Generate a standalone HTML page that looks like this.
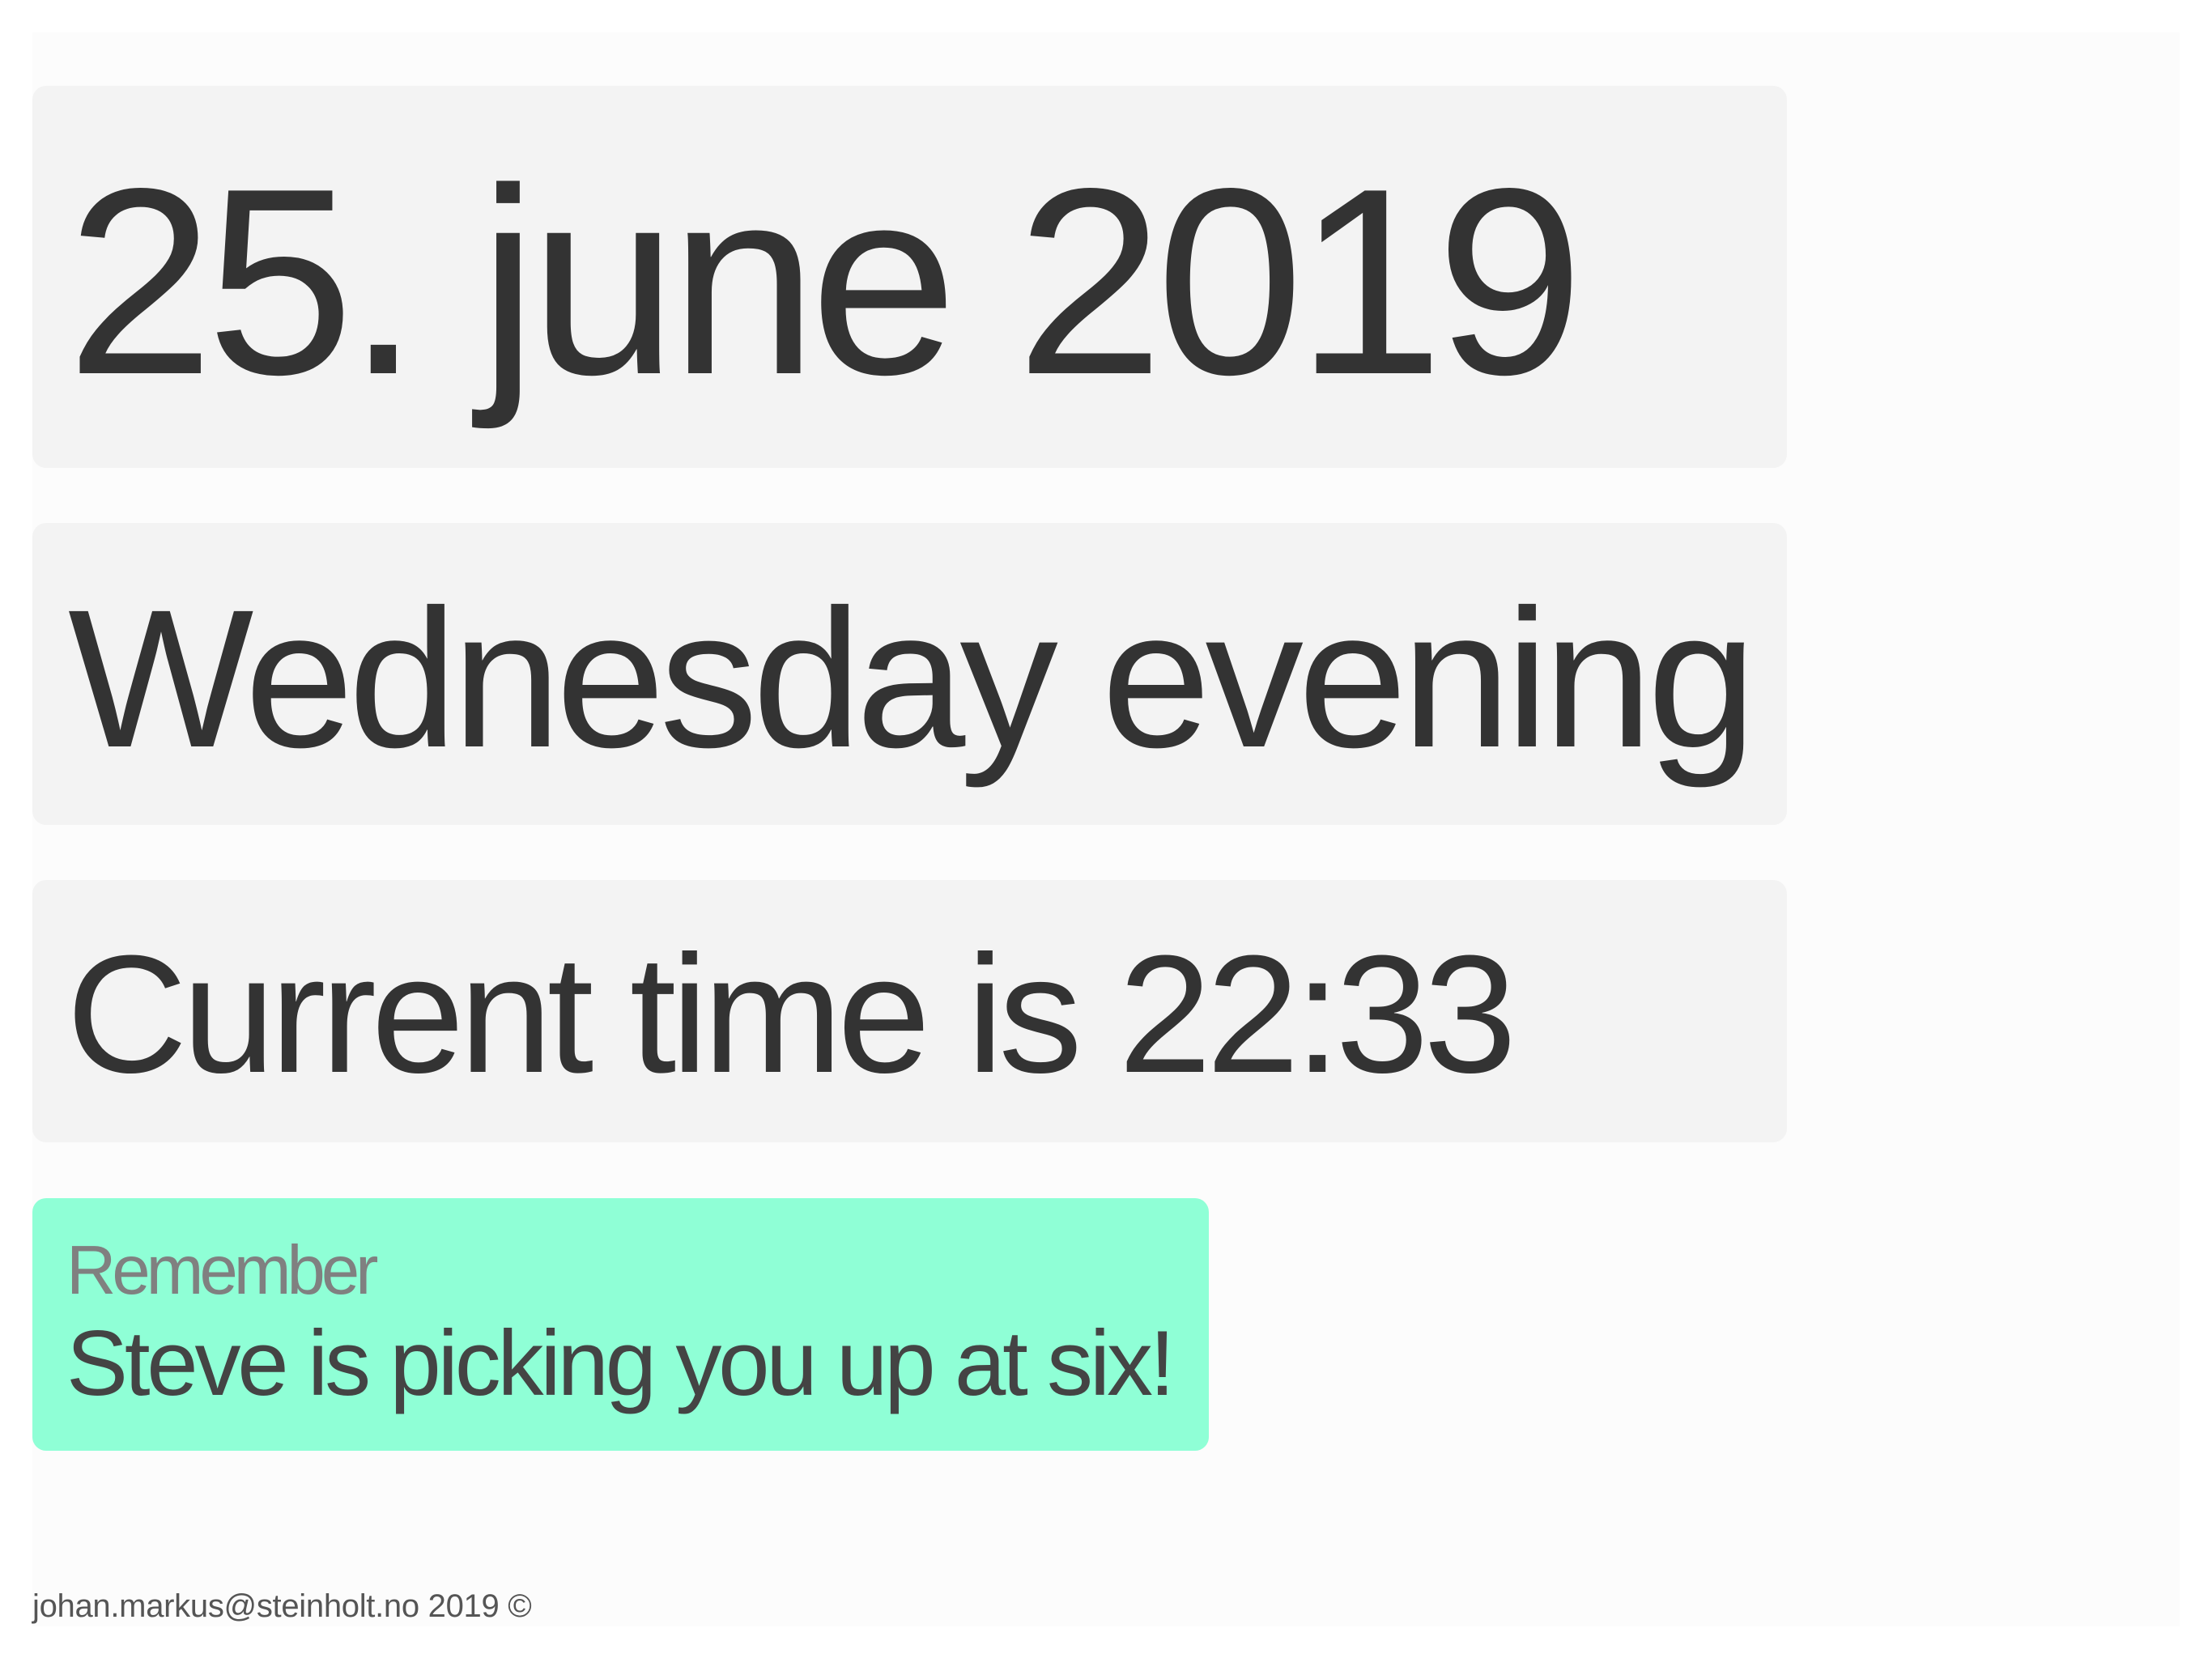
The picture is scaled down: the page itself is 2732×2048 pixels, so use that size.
<!DOCTYPE html>
<html><head><meta charset="utf-8"><style>
html,body{margin:0;padding:0;background:#fff;}
body{width:2732px;height:2048px;position:relative;overflow:hidden;font-family:"Liberation Sans",sans-serif;}
.c{position:absolute;left:40px;top:40px;width:2652px;height:1969px;background:#fcfcfc;}
.b{position:absolute;left:40px;width:2167px;background:#f3f3f3;border-radius:17px;}
.t{position:absolute;line-height:1;white-space:nowrap;color:#333;}
</style></head><body>
<div class="c"></div>
<div class="b" style="top:106px;height:472px;"></div>
<div class="b" style="top:646px;height:373px;"></div>
<div class="b" style="top:1087px;height:324px;"></div>
<div class="b" style="top:1480px;height:312px;width:1453px;background:#8fffd6;"></div>
<div class="t" style="left:82px;top:184px;font-size:328px;letter-spacing:-9.5px;">25. june 2019</div>
<div class="t" style="left:84px;top:717px;font-size:243px;letter-spacing:-7px;">Wednesday evening</div>
<div class="t" style="left:82px;top:1149px;font-size:207px;letter-spacing:-6.5px;">Current time is 22:33</div>
<div class="t" style="left:82px;top:1527px;font-size:85px;letter-spacing:-5px;color:#808080;">Remember</div>
<div class="t" style="left:82px;top:1628px;font-size:114px;letter-spacing:-4.2px;color:#444;">Steve is picking you up at six!</div>
<div class="t" style="left:40px;top:1964px;font-size:40px;letter-spacing:-0.3px;color:#555;">johan.markus@steinholt.no 2019 ©</div>
</body></html>
